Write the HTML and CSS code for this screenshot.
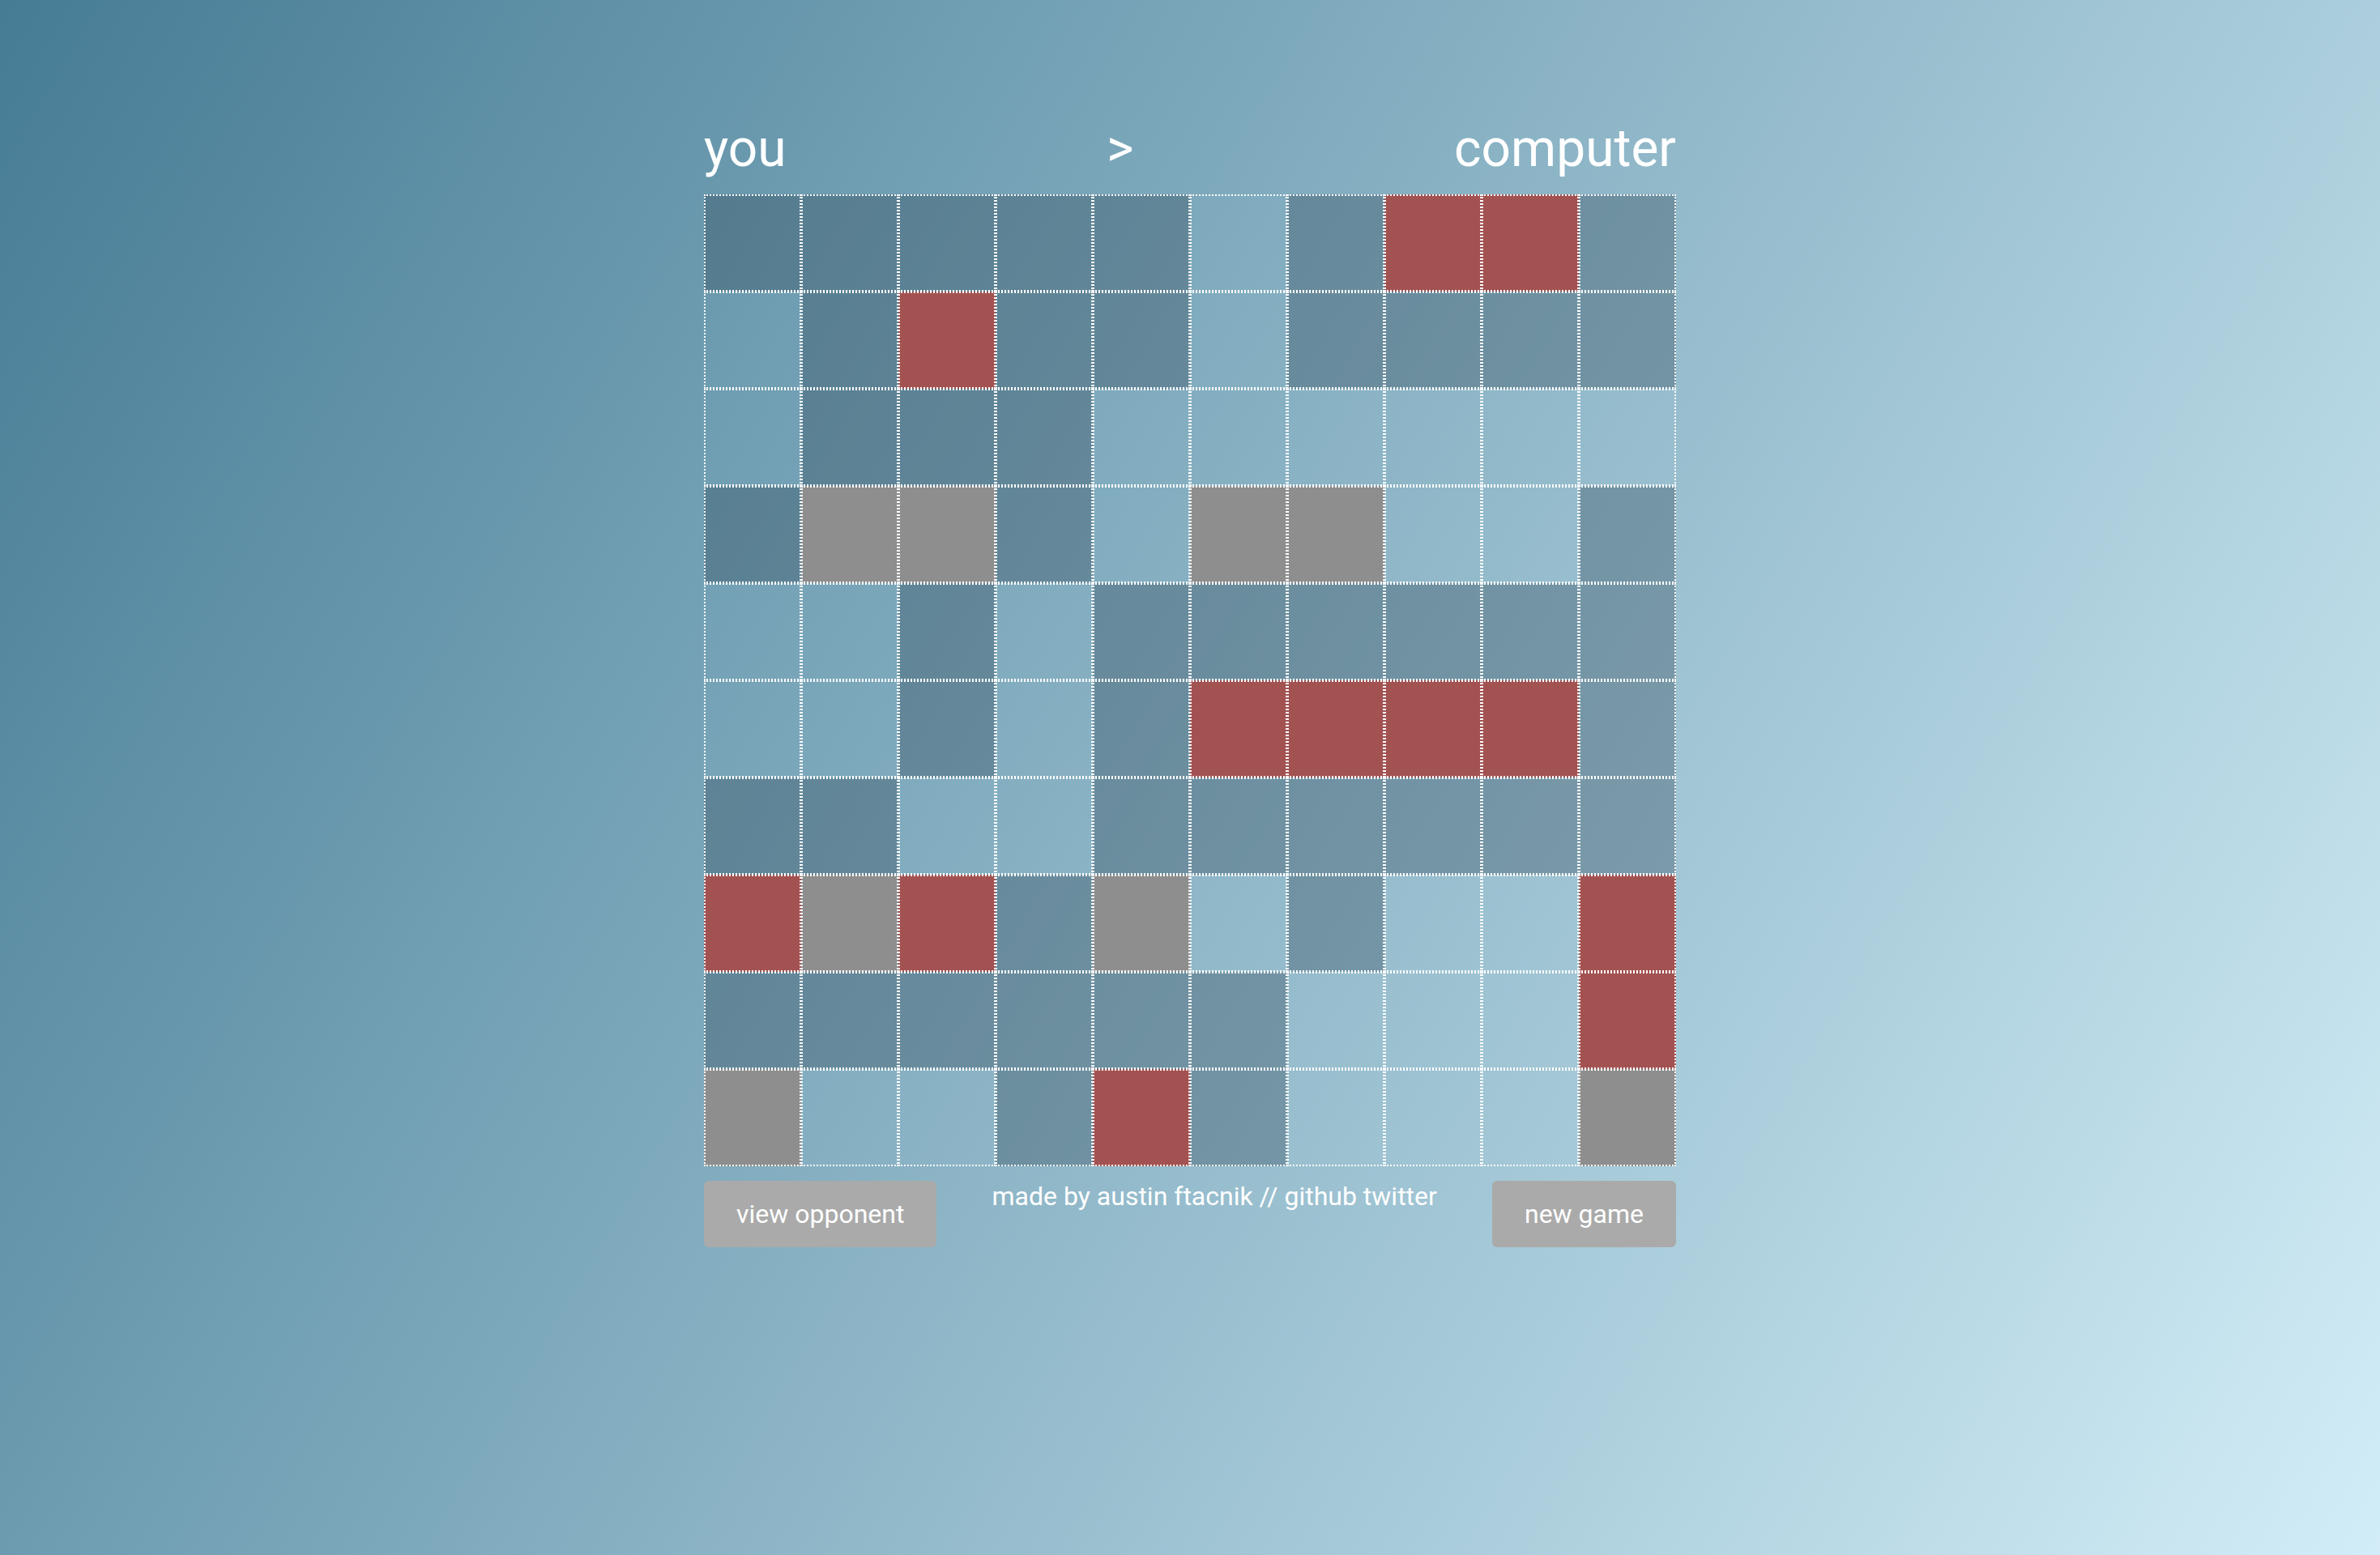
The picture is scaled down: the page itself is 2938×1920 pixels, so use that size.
FILE: index.html
```html
<!DOCTYPE html>
<html lang="en">
<head>
<meta charset="utf-8">
<title>battleship</title>
<link rel="stylesheet" href="styles.css">
</head>
<body>
<div class="game">
  <div class="header">
    <span class="player">you</span>
    <span class="turn">&gt;</span>
    <span class="player">computer</span>
  </div>
  <div class="board">
    <div class="cell s"></div><div class="cell s"></div><div class="cell s"></div><div class="cell s"></div><div class="cell s"></div><div class="cell"></div><div class="cell s"></div><div class="cell hit"></div><div class="cell hit"></div><div class="cell s"></div>
    <div class="cell"></div><div class="cell s"></div><div class="cell hit"></div><div class="cell s"></div><div class="cell s"></div><div class="cell"></div><div class="cell s"></div><div class="cell s"></div><div class="cell s"></div><div class="cell s"></div>
    <div class="cell"></div><div class="cell s"></div><div class="cell s"></div><div class="cell s"></div><div class="cell"></div><div class="cell"></div><div class="cell"></div><div class="cell"></div><div class="cell"></div><div class="cell"></div>
    <div class="cell s"></div><div class="cell miss"></div><div class="cell miss"></div><div class="cell s"></div><div class="cell"></div><div class="cell miss"></div><div class="cell miss"></div><div class="cell"></div><div class="cell"></div><div class="cell s"></div>
    <div class="cell"></div><div class="cell"></div><div class="cell s"></div><div class="cell"></div><div class="cell s"></div><div class="cell s"></div><div class="cell s"></div><div class="cell s"></div><div class="cell s"></div><div class="cell s"></div>
    <div class="cell"></div><div class="cell"></div><div class="cell s"></div><div class="cell"></div><div class="cell s"></div><div class="cell hit"></div><div class="cell hit"></div><div class="cell hit"></div><div class="cell hit"></div><div class="cell s"></div>
    <div class="cell s"></div><div class="cell s"></div><div class="cell"></div><div class="cell"></div><div class="cell s"></div><div class="cell s"></div><div class="cell s"></div><div class="cell s"></div><div class="cell s"></div><div class="cell s"></div>
    <div class="cell hit"></div><div class="cell miss"></div><div class="cell hit"></div><div class="cell s"></div><div class="cell miss"></div><div class="cell"></div><div class="cell s"></div><div class="cell"></div><div class="cell"></div><div class="cell hit"></div>
    <div class="cell s"></div><div class="cell s"></div><div class="cell s"></div><div class="cell s"></div><div class="cell s"></div><div class="cell s"></div><div class="cell"></div><div class="cell"></div><div class="cell"></div><div class="cell hit"></div>
    <div class="cell miss"></div><div class="cell"></div><div class="cell"></div><div class="cell s"></div><div class="cell hit"></div><div class="cell s"></div><div class="cell"></div><div class="cell"></div><div class="cell"></div><div class="cell miss"></div>
  </div>
  <div class="footer">
    <button class="btn">view opponent</button>
    <div class="credit">made by austin ftacnik // github twitter</div>
    <button class="btn">new game</button>
  </div>
</div>
</body>
</html>
```
FILE: styles.css
```css
html, body {
  margin: 0;
  padding: 0;
}
body {
  min-height: 1920px;
  background: linear-gradient(120deg, #467c95 0%, #d2edf7 100%);
  font-family: Roboto, "Liberation Sans", sans-serif;
  color: #fff;
}
.game {
  width: 1200px;
  margin: 0 auto;
  padding-top: 146px;
}
.header {
  display: flex;
  justify-content: space-between;
  font-size: 64px;
  margin-bottom: 19px;
}
.board {
  display: grid;
  grid-template-columns: repeat(10, 120px);
  grid-auto-rows: 120px;
}
.cell {
  box-sizing: border-box;
  border: 2px dotted #fff;
}
.cell.s {
  background: rgba(40, 62, 78, 0.32);
}
.cell.hit {
  background: #a35252;
}
.cell.miss {
  background: #8e8e8e;
}
.footer {
  display: flex;
  justify-content: space-between;
  align-items: flex-start;
  margin-top: 18px;
  font-size: 32px;
}
.btn {
  font-family: Roboto, "Liberation Sans", sans-serif;
  font-size: 32px;
  color: #fff;
  background: #aaaaaa;
  border: none;
  border-radius: 6px;
  height: 82px;
  padding: 0 40px;
}
.credit {
  line-height: normal;
}
```
